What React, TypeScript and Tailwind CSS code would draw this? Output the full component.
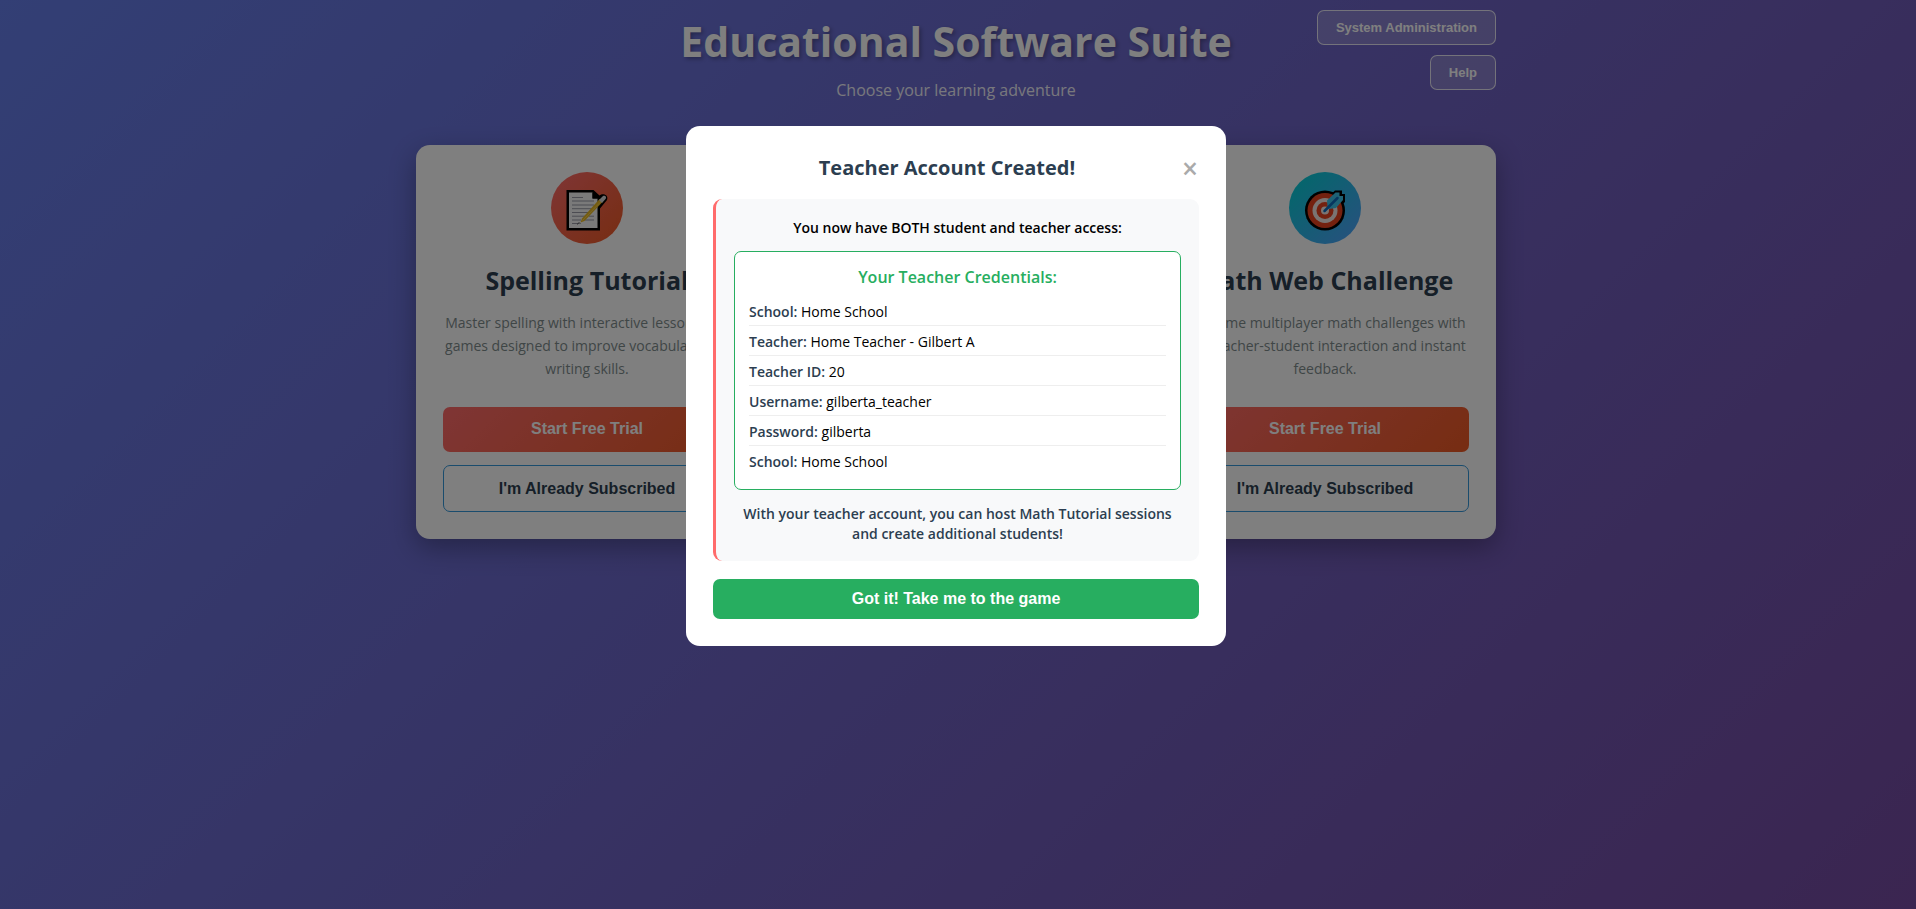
import { useState } from "react";
import type { ReactNode } from "react";

type Product = {
  title: string;
  description: string;
  icon: ReactNode;
  iconClass: string;
  columnClass: string;
};

type Credential = {
  label: string;
  value: string;
};

function MemoIcon() {
  return (
    <svg viewBox="0 0 72 72" className="h-full w-full" aria-hidden="true">
      <path d="M15.500 18H42.500L48.500 23.500C52 20.500 58 23 56 28L49 36.500V58.500H15.500Z" fill="#000" />
      <path d="M18 20.500H41.500V26.500H46.500V56H18Z" fill="#f5f5f5" />
      <path d="M41.500 20.500L47 26.500H41.500Z" fill="#000" />
      <path
        d="M21 25.500H32M21 29H43M21 33H43M21 36.700H42M21 40.500H40M21 44.200H36M38 44.200H43M21 48H30M34 48H43M21 51.500H28"
        stroke="#8d8f9b"
        strokeWidth="0.9"
      />
      <path d="M29.500 50.500L31 46.500L48.500 27L51.500 30L33.500 49Z" fill="#e8b923" />
      <path d="M31.500 48.500L50.500 29" stroke="#fbd75e" strokeWidth="0.8" />
      <path d="M48 28L52 24C54 23 56 25 54.500 27L51 31Z" fill="#d9dadd" />
      <path d="M26 52.500Q28 49.500 29.500 51.500" stroke="#444" strokeWidth="0.8" fill="none" />
    </svg>
  );
}

function TargetIcon() {
  return (
    <svg viewBox="0 0 72 72" className="h-full w-full" aria-hidden="true">
      <circle cx="36" cy="38.500" r="20" fill="#000" />
      <path d="M38 26L46 18.500H53V22H56V30L47 38Z" fill="#000" />
      <circle cx="36" cy="38.500" r="17.500" fill="#e8431f" />
      <circle cx="36" cy="38.500" r="12.500" fill="#f4e9e4" />
      <circle cx="36" cy="38.500" r="8.500" fill="#e8431f" />
      <circle cx="36" cy="38.500" r="4" fill="#f4e9e4" />
      <path d="M38.500 35.500L38 28.500L46.500 20.500H50.500V24H54V28L47 36L40 37Z" fill="#3cc5ea" />
      <path d="M35.500 39L48.500 26" stroke="#0f6cbd" strokeWidth="2.500" strokeLinecap="round" />
    </svg>
  );
}

const products: Product[] = [
  {
    title: "Spelling Tutorial",
    description:
      "Master spelling with interactive lessons and games designed to improve vocabulary and writing skills.",
    icon: <MemoIcon />,
    iconClass: "bg-linear-[135deg,#ff6b6b,#ee5a24]",
    columnClass: "col-start-1",
  },
  {
    title: "Math Web Challenge",
    description:
      "Real-time multiplayer math challenges with live teacher-student interaction and instant feedback.",
    icon: <TargetIcon />,
    iconClass: "bg-linear-[135deg,#00d2d3,#54a0ff]",
    columnClass: "col-start-3",
  },
];

const credentials: Credential[] = [
  { label: "School:", value: "Home School" },
  { label: "Teacher:", value: "Home Teacher - Gilbert A" },
  { label: "Teacher ID:", value: "20" },
  { label: "Username:", value: "gilberta_teacher" },
  { label: "Password:", value: "gilberta" },
  { label: "School:", value: "Home School" },
];

function ProductCard({ product }: { product: Product }) {
  return (
    <article
      className={`row-start-1 rounded-[14px] bg-white p-[27px] text-center shadow-[0_9px_27px_rgba(0,0,0,0.3)] ${product.columnClass}`}
    >
      <div className={`mx-auto size-[72px] rounded-full ${product.iconClass}`}>{product.icon}</div>
      <h2 className="mt-[17px] text-[25px] leading-[38px] font-bold whitespace-nowrap text-[#2c3e50]">
        {product.title}
      </h2>
      <p className="mt-3 text-[14px] leading-[23px] text-[#7f8c8d]">{product.description}</p>
      <button
        type="button"
        className="mt-[27px] h-[45px] w-full rounded-[7px] bg-linear-[135deg,#ff6b6b,#ee5a24] pb-0.5 font-['Liberation_Sans',Arial,sans-serif] text-base font-bold text-white"
      >
        Start Free Trial
      </button>
      <button
        type="button"
        className="mt-[13px] h-[47px] w-full rounded-[7px] border border-[#3498db] font-['Liberation_Sans',Arial,sans-serif] text-base font-bold text-[#2c3e50]"
      >
        I'm Already Subscribed
      </button>
    </article>
  );
}

function TeacherModal({ onClose }: { onClose: () => void }) {
  return (
    <div className="fixed inset-0 overflow-y-auto bg-black/50 pt-[126px] pr-1">
      <div
        role="dialog"
        aria-modal="true"
        aria-labelledby="modal-title"
        className="mx-auto w-full max-w-[540px] rounded-[14px] bg-white px-[27px] pt-[26px] pb-[27px]"
      >
        <div className="flex items-center">
          <h2 id="modal-title" className="flex-1 text-center text-[20px] leading-8 font-bold text-[#2c3e50]">
            Teacher Account Created!
          </h2>
          <button
            type="button"
            aria-label="Close"
            onClick={onClose}
            className="w-[18px] text-[28px] leading-8 font-semibold text-[#aaa]"
          >
            ×
          </button>
        </div>

        <div className="mt-[15px] rounded-[9px] border-l-3 border-[#ff6b6b] bg-[#f8f9fa] px-[18px] pt-[18px] pb-[17px] text-[14px] text-black">
          <p className="text-center leading-[22px] font-semibold">
            You now have BOTH student and teacher access:
          </p>
          <div className="mt-3 rounded-[7px] border border-[#27ae60] bg-white p-3.5">
            <h3 className="text-center text-base leading-[22px] font-semibold text-[#27ae60]">
              Your Teacher Credentials:
            </h3>
            <ul className="mt-2">
              {credentials.map((item, i) => (
                <li
                  key={i}
                  className="border-b border-[#eee] pt-1.5 pb-1 leading-[19px] last:border-b-0"
                >
                  <strong className="font-semibold text-[#2c3e50]">{item.label}</strong> {item.value}
                </li>
              ))}
            </ul>
          </div>
          <p className="mt-3.5 text-center leading-5 font-semibold text-[#2c3e50]">
            With your teacher account, you can host Math Tutorial sessions and create additional students!
          </p>
        </div>

        <button
          type="button"
          onClick={onClose}
          className="mt-[18px] h-10 w-full rounded-[7px] bg-[#27ae60] font-['Liberation_Sans',Arial,sans-serif] text-base font-bold text-white"
        >
          Got it! Take me to the game
        </button>
      </div>
    </div>
  );
}

export default function App() {
  const [showModal, setShowModal] = useState(true);

  return (
    <div className="min-h-screen bg-linear-[135deg,#667eea,#764ba2] pr-1 font-['Open_Sans','Noto_Sans',sans-serif]">
      <div className="relative mx-auto max-w-[1080px]">
        <header className="pt-[11px] text-center text-white">
          <h1 className="text-[41px] leading-[60px] font-bold [text-shadow:2px_2px_4px_rgba(0,0,0,0.3)]">
            Educational Software Suite
          </h1>
          <p className="mt-[5px] text-base leading-7 opacity-90">Choose your learning adventure</p>
        </header>
        <nav className="absolute top-[10px] right-0 flex flex-col items-end gap-[10px] font-['Liberation_Sans',Arial,sans-serif] text-[13px] font-bold text-white">
          <button type="button" className="h-[35px] rounded-[7px] border border-white/80 bg-white/20 px-[18px]">
            System Administration
          </button>
          <button type="button" className="h-[35px] rounded-[7px] border border-white/80 bg-white/20 px-[18px]">
            Help
          </button>
        </nav>
        <main className="mt-[41px] grid grid-cols-3 gap-[27px]">
          {products.map((product) => (
            <ProductCard key={product.title} product={product} />
          ))}
        </main>
      </div>
      {showModal && <TeacherModal onClose={() => setShowModal(false)} />}
    </div>
  );
}
